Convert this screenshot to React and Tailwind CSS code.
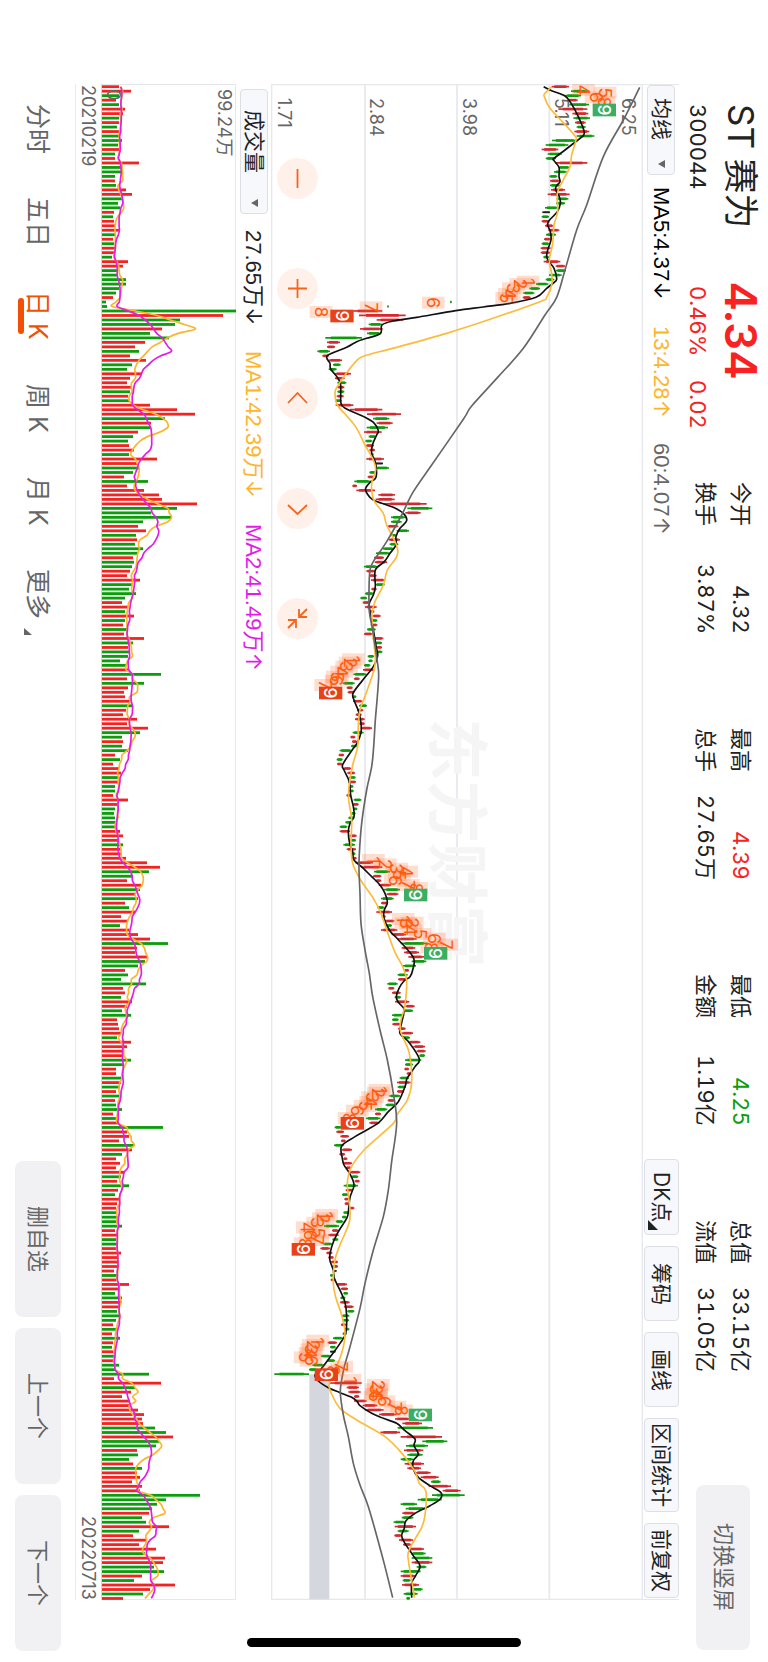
import { useState } from 'react';

const RED = '#d42a2f';
const GREEN = '#0b9d0b';

const stats = [
  [
    { label: '今开', value: '4.32' },
    { label: '换手', value: '3.87%' },
  ],
  [
    { label: '最高', value: '4.39', color: 'text-[#f92222]' },
    { label: '总手', value: '27.65万' },
  ],
  [
    { label: '最低', value: '4.25', color: 'text-[#0b9d0b]' },
    { label: '金额', value: '1.19亿' },
  ],
  [
    { label: '总值', value: '33.15亿' },
    { label: '流值', value: '31.05亿' },
  ],
];

const periods = ['分时', '五日', '日 K', '周 K', '月 K', '更多'];

// Daily volume, oldest first. Negative means the day closed lower.
const volumes = [
  17, 29, -17, 14, -17, 23, 21, -17, 17, -15, 18, -18, -20, -16, 18, -13, 13, 37, -20, -20,
  -13, 13, -14, 24, 30, -21, -16, -18, 12, -11, 12, 13, 17, -14, 11, -12, 13, 13, -10, 26,
  21, -16, -16, -24, -24, -17, -14, 11, -4, -5, -134, 121, -78, -73, 60, -48, -67, 43, 33, -37,
  28, 44, -30, -25, 40, 28, 25, 29, -28, 26, -28, 48, 75, 93, -63, 49, -48, 36, -31, -26,
  27, 32, -27, 55, 35, -37, -31, 22, -46, 25, 42, 57, 60, 95, -75, -49, -69, -41, 36, 44,
  -34, 35, -33, -41, -36, 31, -32, -30, 28, 25, 38, -30, -27, -34, -23, 20, 26, -23, 32, -23,
  21, -26, 22, 42, -31, 26, -27, -26, -18, -24, 26, -59, 25, -42, 26, 22, 23, 28, -30, 24,
  21, 35, 25, 46, -38, -20, 21, -20, -26, 13, -18, 11, 17, 19, -17, 17, -13, -13, 11, 26,
  16, -13, -12, -13, -14, -14, 18, 21, 16, -21, 19, 19, 24, 45, 58, -47, -31, 25, 39, -38,
  33, -36, 23, -27, 33, 19, 26, -18, 27, 36, 48, -66, 35, 33, 46, -43, -36, 23, -26, -19,
  -44, 21, 23, -19, 30, 25, -20, -29, 15, 16, 17, 19, -15, 29, 25, 21, 20, -29, -22, 14,
  14, -20, 19, -18, 14, -19, 13, -14, -20, 11, -15, 17, -61, 25, 27, 17, -32, 30, -20, 14,
  18, 14, 23, -19, 15, -27, 16, -13, 17, 15, 14, -15, -15, -15, -20, 13, 15, -14, -15, 16,
  19, 16, 16, 16, 12, -16, 14, 27, 17, -13, -20, 19, 18, -15, -18, -14, 11, -14, 10, -18,
  11, -10, 11, -13, 13, -17, -14, -47, 12, 59, -33, 29, 20, 28, 27, 36, 42, 40, 41, -53,
  -64, 71, -57, -54, 35, -36, -27, 31, -40, 35, 38, 30, 40, 38, -98, -64, -55, -50, 47, -40,
  -44, 67, -37, 31, 44, 37, 54, -43, 63, 61, -52, -62, 40, -32, 73, 48, -41, 21,
];

// Daily candles as colour + low-high, oldest first (r up, g down, k flat).
const candles = `
r905-957 g963-1013 g945-993 r952-983 g958-1017 r925-1012 r967-1015 g970-1020 r975-1007 g980-1007
r973-1018 g980-1033 g906-983 g887-955 r875-925 g893-935 g887-918 r915-1012 g925-960 g912-950
g898-922 r900-930 g900-930 r903-945 r893-959 g920-955 g918-945 g885-925 k877-900 g875-897
r875-897 r885-910 r895-928 g888-918 r882-902 g875-897 r872-902 r872-900 g880-897 r881-931
r917-945 g918-948 g897-935 g887-913 g858-895 g838-870 g820-853 r818-842 g600-605 g412-416
r310-397 r327-467 r380-460 g356-397 r330-398 g351-393 g226-336 r231-270 r231-255 g202-240
r217-237 r235-276 g249-272 g236-260 r252-303 r255-284 g262-289 r262-283 g262-283 r260-281
g255-275 r257-310 r300-397 r351-453 g369-418 r380-428 g350-414 r342-395 g356-378 g346-367
r348-372 r358-375 g360-371 r349-402 k376-399 g376-417 g358-378 r353-372 g313-363 r307-321
r319-375 r385-435 r377-434 r400-530 g472-547 r466-512 g423-467 g423-455 r412-445 g440-477
g425-438 r416-450 g419-445 g398-432 g378-419 r372-402 r374-411 g342-383 r349-375 r358-380
r363-406 g377-404 r364-380 g345-371 g331-351 r338-358 r345-380 r357-373 r368-392 g366-382
r362-382 g351-377 r342-367 r368-400 g375-396 r380-396 g376-397 g353-372 g355-368 g342-361
r339-374 g310-349 r312-329 g278-314 r290-308 r293-313 g306-319 r309-337 g327-351 r321-340
r317-335 r315-344 r328-344 r332-366 g308-341 r301-316 r306-321 g303-321 g269-305 r266-282
g260-278 r261-277 r280-303 r292-315 g297-317 r295-318 g297-310 g298-311 r289-303 g311-334
r309-326 g311-322 g304-317 g295-313 g286-306 g269-292 r269-300 r299-320 g303-318 g280-315
r290-318 g305-316 r306-320 r316-369 r333-397 g372-420 r369-394 r376-394 r386-424 g402-450
r410-445 g393-431 r393-412 g382-403 r379-426 r395-407 r405-433 g405-426 r393-442 r425-468
r443-500 g452-533 r455-496 r462-507 r475-522 g485-529 g459-498 r463-477 g443-473 r444-470
g412-443 r415-433 r426-452 g434-453 r435-478 r466-494 g459-489 g426-463 g426-446 r427-452
r444-467 r455-489 g456-480 r475-511 r490-525 r500-527 g508-525 g465-514 g465-489 r463-477
r470-487 g449-477 r441-482 g443-468 r441-462 g418-450 r413-434 g407-435 g375-412 r375-393
g348-391 r358-388 g254-275 r259-282 r271-297 r273-287 g252-281 r275-306 r268-285 r280-292
r279-306 r288-303 r299-331 g304-325 r314-329 g281-324 r287-309 g276-295 r283-295 r284-297
r297-313 g280-298 g276-289 g257-280 g222-267 r246-265 r235-266 g247-265 g220-246 r211-240
r229-247 r235-251 r243-264 r247-264 k249-260 g240-254 r242-256 r259-291 r272-294 g280-294
g271-286 r270-299 r282-311 g292-313 g276-298 g278-297 r273-288 g283-298 g278-290 g249-279
r233-261 g240-257 k240-257 g213-243 g231-255 g187-222 g177-200 g73-177 r203-262 r240-335
r290-327 r295-332 r312-328 r312-350 r338-382 r345-401 r387-440 r435-480 r457-516 g443-549
r391-450 r452-576 g517-592 g468-534 r462-520 g472-518 g452-490 r464-522 r472-513 r495-542
r512-566 g543-572 r536-603 r578-632 g546-644 g503-575 g452-501 g467-530 r457-495 g455-490
g431-467 r434-498 g443-476 r433-455 r447-489 r459-483 r475-522 g483-527 g485-547 r485-547
g500-529 g452-512 r452-497 g458-482 r456-507 g488-518 g461-503 g469-480`
  .trim()
  .split(/\s+/)
  .map((item) => {
    const [low, high] = item.slice(1).split('-').map(Number);
    return { kind: item[0], low, high };
  });

const ma5 = `881,50 905,62 945,78 962,98 985,140 1003,188 990,205 968,222 945,240 912,265 912,272 927,292
927,320 930,335 918,350 918,362 928,380 931,400 922,425 897,452 893,465 901,485 903,510 893,540 890,560
897,575 912,595 920,625 915,635 890,655 858,682 780,700 700,711 617,722 500,742 430,753 396,765 391,791
350,805 320,815 290,832 232,857 240,880 242,897 262,922 272,945 273,1000 290,1017 345,1042 373,1060
385,1082 380,1095 368,1123 365,1150 377,1180 378,1222 360,1237 347,1255 352,1272 368,1289 395,1300
430,1312 460,1330 470,1352 450,1375 438,1400 438,1425 420,1450 403,1475 376,1500 376,1550 370,1575
358,1600 360,1625 370,1680 378,1727 383,1757 370,1790 345,1822 310,1868 312,1890 326,1925 333,1960
333,1987 322,2018 305,2042 278,2084 282,2100 298,2135 302,2175 310,2210 312,2240 300,2260 295,2285
299,2320 308,2345 312,2370 340,2395 365,2420 388,2443 405,2470 412,2498 403,2520 402,2545 420,2583
443,2607 490,2662 488,2700 480,2720 462,2733 447,2755 439,2780 445,2797 462,2818 455,2858 450,2890
478,2918 508,2967 495,2990 478,3015 470,3028 465,3050 445,3095 415,3125 387,3157 350,3180 315,3200
275,3228 277,3265 282,3285 300,3312 312,3345 300,3382 295,3425 290,3445 262,3490 245,3530 239,3567
250,3600 253,3625 272,3665 285,3697 290,3740 287,3790 270,3820 245,3855 215,3895 195,3915 205,3933
235,3953 270,3968 305,3982 322,3995 330,4007 365,4030 400,4045 440,4060 465,4082 495,4107 492,4127
505,4152 490,4172 490,4197 505,4222 540,4247 573,4268 570,4288 540,4307 500,4327 468,4352 463,4375
455,4397 465,4420 490,4457 510,4488 497,4517 485,4540 485,4583`;

const ma13 = `905,50 885,70 883,80 900,115 940,158 975,198 978,210 965,255 960,290 937,335 922,370 923,425
912,465 908,520 898,570 903,600 906,640 890,682 870,695 720,748 590,790 440,832 345,857 320,872 285,915
262,950 255,968 262,1005 290,1037 320,1075 345,1125 370,1170 377,1200 366,1235 365,1260 372,1292
400,1330 410,1365 440,1427 440,1460 412,1500 400,1545 375,1595 366,1630 369,1690 376,1765 372,1800
350,1865 330,1920 325,1965 323,2030 308,2085 297,2150 296,2190 305,2250 303,2320 308,2380 332,2430
370,2485 393,2530 412,2585 435,2647 458,2690 470,2733 464,2810 453,2850 452,2885 478,2950 485,3037
472,3090 440,3135 430,3160 345,3237 310,3280 297,3310 292,3345 300,3420 297,3460 270,3525 255,3570
250,3640 258,3685 275,3735 285,3790 275,3850 250,3910 237,3945 245,3972 270,4015 320,4050 405,4100
460,4155 495,4205 508,4240 528,4265 525,4335 515,4372 478,4438 475,4470 490,4560 493,4583`;

const ma60 = `1169,52 1120,150 1060,260 1010,405 980,480 945,600 920,682 885,735 820,835 745,920 665,1008
640,1048 545,1185 490,1265 455,1335 410,1415 370,1475 360,1500 357,1560 358,1625 368,1680 382,1775
386,1815 382,1880 376,1950 371,2030 365,2090 350,2160 335,2260 328,2350 327,2400 330,2470 333,2560
345,2640 358,2710 368,2780 390,2880 412,2970 430,3070 440,3160 425,3275 415,3360 400,3440 370,3540
345,3640 330,3715 300,3830 283,3890 275,3930 271,3970 280,4035 295,4100 310,4180 330,4245 355,4310
385,4415 405,4490 428,4583`;

// Nine-turn counts: [number, x, y]
const counts = [
  [4, 1000, 60], [5, 1065, 68], [6, 1038, 82], [8, 1062, 96],
  [1, 834, 635], [2, 812, 642], [3, 790, 655], [4, 778, 672], [5, 770, 684], [6, 550, 698], [7, 363, 712], [8, 213, 726],
  [1, 310, 1768], [2, 300, 1778], [3, 290, 1790], [4, 275, 1805], [5, 262, 1820], [6, 258, 1832], [7, 227, 1845],
  [1, 370, 2370], [2, 405, 2383], [3, 440, 2396], [4, 470, 2405], [5, 448, 2415], [6, 435, 2432], [7, 475, 2445], [8, 500, 2454],
  [1, 460, 2547], [3, 468, 2560], [2, 487, 2558], [4, 482, 2580], [5, 510, 2592], [6, 553, 2606], [7, 590, 2624], [8, 545, 2632],
  [1, 390, 3060], [2, 385, 3068], [3, 368, 3082], [4, 362, 3096], [5, 345, 3108], [6, 322, 3122], [8, 297, 3144],
  [1, 230, 3435], [2, 220, 3445], [3, 203, 3458], [4, 172, 3472], [5, 205, 3488], [6, 182, 3495], [7, 203, 3510], [8, 165, 3520],
  [1, 203, 3812], [2, 190, 3825], [3, 185, 3838], [4, 180, 3850], [5, 165, 3862], [6, 183, 3872], [7, 275, 3890], [8, 250, 3902],
  [1, 300, 3930], [2, 385, 3945], [3, 380, 3958], [4, 380, 3972], [5, 375, 3980], [6, 402, 3994], [7, 435, 4010], [8, 455, 4022],
];

const nines = [
  [1063, 120, '#3cae62'],
  [276, 738, '#e8411a'],
  [242, 1869, '#e8411a'],
  [497, 2475, '#3cae62'],
  [557, 2650, '#3cae62'],
  [307, 3160, '#e8411a'],
  [160, 3538, '#e8411a'],
  [229, 3914, '#e8411a'],
  [511, 4035, '#3cae62'],
];

function smoothPath(points) {
  let d = `M${points[0][0]} ${points[0][1]}`;
  for (let i = 0; i < points.length - 1; i++) {
    const p0 = points[i - 1] || points[i];
    const p1 = points[i];
    const p2 = points[i + 1];
    const p3 = points[i + 2] || p2;
    d += `C${p1[0] + (p2[0] - p0[0]) / 6} ${p1[1] + (p2[1] - p0[1]) / 6} ${p2[0] - (p3[0] - p1[0]) / 6} ${p2[1] - (p3[1] - p1[1]) / 6} ${p2[0]} ${p2[1]}`;
  }
  return d;
}

function parsePoints(text) {
  return text.trim().split(/\s+/).map((p) => p.split(',').map(Number));
}

function averageLine(days) {
  return volumes.map((_, i) => {
    let sum = 0;
    for (let k = i - days + 1; k <= i; k++) sum += k < 0 ? 19 : Math.abs(volumes[k]);
    return [102 + sum / days, 86.7 + i * 4.486];
  });
}

function SideText({ x, y, children, ...rest }) {
  return (
    <text transform={`translate(${x} ${y}) rotate(90)`} {...rest}>
      {children}
    </text>
  );
}

function PriceChart() {
  return (
    <svg viewBox="63 42 1116 4548" className="block h-full w-full [writing-mode:horizontal-tb]" aria-label="日K线图">
      <g fill="none" stroke="#e6e8ee" strokeWidth="4">
        <path d="M345 44V4588M621 44V4588M898 44V4588" strokeWidth="5" />
        <path d="M65 44H1177V4588H65Z" />
      </g>
      <SideText x="552" y="1945" fontSize="187" fontWeight="700" fill="#f5f5f6">东方财富</SideText>
      <rect x="178" y="3913" width="60" height="675" fill="#d4d7dd" />
      <g fontSize="54" fill="#666">
        <SideText x="83" y="84">1.71</SideText>
        <SideText x="361" y="84">2.84</SideText>
        <SideText x="638" y="84">3.98</SideText>
        <SideText x="916" y="84">5.11</SideText>
        <SideText x="1117" y="84">6.25</SideText>
      </g>
      {candles.map(({ kind, low, high }, i) => {
        const y = 50 + i * 13.457;
        const color = kind === 'r' ? RED : kind === 'g' ? GREEN : '#222';
        const inset = (high - low) * 0.15;
        return (
          <g key={i} stroke={color}>
            <line x1={low} x2={high} y1={y} y2={y} strokeWidth="5" />
            <line x1={low + inset} x2={high - inset} y1={y} y2={y} strokeWidth={kind === 'k' ? 5 : 8} />
          </g>
        );
      })}
      <g fill="none">
        <path d={smoothPath(parsePoints(ma5))} stroke="#111" strokeWidth="5" />
        <path d={smoothPath(parsePoints(ma13))} stroke="#fdbb3c" strokeWidth="5" />
        <path d={smoothPath(parsePoints(ma60))} stroke="#666" strokeWidth="5" />
      </g>
      {counts.map(([n, x, y]) => (
        <g key={`${n}-${y}`}>
          <rect x={x - 34} y={y - 18} width="68" height="36" fill="#ff6a2a" fillOpacity="0.22" />
          <SideText x={x - 19} y={y} fontSize="52" fill="#ff5a0a" textAnchor="middle">{n}</SideText>
        </g>
      ))}
      {nines.map(([x, y, fill]) => (
        <g key={y}>
          <rect x={x - 35} y={y - 19} width="70" height="38" fill={fill} />
          <SideText x={x - 19} y={y} fontSize="52" fontWeight="500" fill="#fff" textAnchor="middle">9</SideText>
        </g>
      ))}
    </svg>
  );
}

function VolumeChart() {
  return (
    <svg viewBox="101 84 135 1516" className="block h-full w-full [writing-mode:horizontal-tb]" aria-label="成交量图">
      <path d="M101 84.5H235.5V1599.5H101" stroke="#e6e7eb" fill="none" />
      <path d="M101.5 84V1600" stroke="#d5d5da" fill="none" />
      {volumes.map((v, i) => (
        <rect key={i} x="102" y={85.3 + i * 4.486} width={Math.abs(v)} height="2.8" fill={v > 0 ? '#f52222' : GREEN} />
      ))}
      <g fontSize="18" fill="#666">
        <SideText x="107" y="89">0</SideText>
        <SideText x="218" y="89">99.24万</SideText>
      </g>
      <path d={smoothPath(averageLine(5))} stroke="#fdb52c" strokeWidth="1.7" fill="none" />
      <path d={smoothPath(averageLine(10))} stroke="#e21ee6" strokeWidth="1.7" fill="none" />
    </svg>
  );
}

function Picker({ label, options, className }) {
  return (
    <label className={`relative flex w-7 items-center rounded border border-[#dcdfe6] bg-[#f7f8fb] ${className}`}>
      <select
        aria-label={label}
        className="h-full w-full appearance-none bg-transparent text-[21px] leading-[26px] text-[#222] [writing-mode:vertical-rl] [text-orientation:sideways]"
      >
        {options.map((option) => (
          <option key={option}>{option}</option>
        ))}
      </select>
      <svg viewBox="0 0 7 8" className="pointer-events-none absolute bottom-1.5 left-[10px] h-2 w-[7px]">
        <path d="M7 0V8L0 4Z" fill="#666" />
      </svg>
    </label>
  );
}

function ToolButton({ className, children }) {
  return (
    <button className={`relative flex w-[35px] items-center justify-center rounded border border-[#dcdfe6] bg-[#f7f8fb] text-[21px] whitespace-nowrap text-[#222] ${className}`}>
      {children}
    </button>
  );
}

function Reading({ text, up, className }) {
  return (
    <span className={`font-['Liberation_Sans','Noto_Sans_CJK_SC',sans-serif] ${className}`}>
      {text}
      <span className="font-['Inter',sans-serif]">{up ? '↑' : '↓'}</span>
    </span>
  );
}

const chartControls = [
  { label: '缩小', path: 'M20.5 11V30' },
  { label: '放大', path: 'M20.5 11V30M11 20.5H30' },
  { label: '左移', path: 'M11 25L20.5 15L30 25' },
  { label: '右移', path: 'M11 17L20.5 26L30 17' },
  { label: '退出全屏', path: 'M22 11V19H30M22 19L30 11M11 22H19V30M19 22L11 30' },
];

function App() {
  const [period, setPeriod] = useState('日 K');

  return (
    <div className="relative flex h-screen w-full flex-col overflow-hidden bg-white font-['Inter','Noto_Sans_CJK_SC',sans-serif] text-[#222] [writing-mode:vertical-rl] [text-orientation:sideways]">
      <header className="flex w-[89px] items-start whitespace-nowrap pt-[104px] pb-3 tabular-nums">
        <div className="flex h-[178px] flex-col gap-[7px] pr-[5px]">
          <h1 className="text-[35px] leading-[44px]">ST 赛为</h1>
          <p className="text-[22px] leading-7">300044</p>
        </div>
        <div className="flex h-[200px] flex-col gap-[7px] pr-[5px] text-[#f92222]">
          <strong className="text-[44px] leading-[44px] font-semibold">4.34</strong>
          <p className="flex gap-6 ps-1 text-[22px] leading-7">
            <span>0.46%</span>
            <span>0.02</span>
          </p>
        </div>
        <div className="flex gap-[94px] pr-[13px]">
          {stats.map((rows) => (
            <dl key={rows[0].label} className="flex h-[152px] flex-col gap-[7px] text-[22px] leading-7">
              {rows.map((row) => (
                <div key={row.label} className="flex justify-between">
                  <dt>{row.label}</dt>
                  <dd className={row.color}>{row.value}</dd>
                </div>
              ))}
            </dl>
          ))}
        </div>
        <button className="ms-auto mr-[18px] flex h-[165px] w-[54px] items-center justify-center rounded-lg bg-[#f1f1f4] text-[22px] text-[#666]">
          切换竖屏
        </button>
      </header>

      <div className="mt-[84px] mb-[62px] flex w-9 items-center whitespace-nowrap border-x border-[#e6e7eb] pb-px">
        <Picker label="主图指标" options={['均线', 'BOLL']} className="h-[90px] [&>select]:pt-3" />
        <div className="flex gap-[26px] ps-3 text-[22px] leading-7">
          <Reading text="MA5:4.37" className="text-black" />
          <Reading text="13:4.28" up className="text-[#fdb52c]" />
          <Reading text="60:4.07" up className="text-[#666]" />
        </div>
        <div className="ms-auto flex gap-[11px]">
          <ToolButton className="h-[76px]">
            DK点
            <svg viewBox="0 0 10 10" className="absolute bottom-1 left-[3px] size-[10px]">
              <path d="M0 10H10L0 0Z" fill="#222" />
            </svg>
          </ToolButton>
          <ToolButton className="h-[75px]">筹码</ToolButton>
          <ToolButton className="h-[75px]">画线</ToolButton>
          <ToolButton className="h-[94px]">区间统计</ToolButton>
          <ToolButton className="h-[75px]">前复权</ToolButton>
        </div>
      </div>

      <div className="relative mt-[84px] mb-[62px] min-w-0 flex-1">
        <PriceChart />
        <div className="absolute top-[74px] left-[6px] flex gap-[69px]">
          {chartControls.map(({ label, path }) => (
            <button key={label} aria-label={label} className="size-[41px] rounded-full bg-[#fff1ea]">
              <svg viewBox="0 0 41 41" className="size-full" fill="none" stroke="#f2651f" strokeWidth="1.8">
                <path d={path} />
              </svg>
            </button>
          ))}
        </div>
      </div>

      <div className="mt-[89px] mb-[62px] flex w-[35px] items-center whitespace-nowrap">
        <Picker label="副图指标" options={['成交量', 'MACD']} className="h-[125px] [&>select]:pt-5" />
        <div className="flex gap-[26px] ps-4 text-[22px] leading-7">
          <Reading text="27.65万" />
          <Reading text="MA1:42.39万" className="text-[#fdb52c]" />
          <Reading text="MA2:41.49万" up className="text-[#e21ee6]" />
        </div>
      </div>

      <div className="mt-[84px] mb-[62px] w-[135px]">
        <VolumeChart />
      </div>

      <div className="mt-[84px] mb-[62px] flex w-[26px] justify-between border-l border-[#ececef] pt-px text-[18px] leading-[25px] text-[#666]">
        <time dateTime="2021-02-19">20210219</time>
        <time dateTime="2022-07-13">20220713</time>
      </div>

      <footer className="flex w-[75px] items-center whitespace-nowrap pt-[104px] pb-[11px]">
        <nav className="flex gap-[43px]">
          {periods.map((name) => (
            <button
              key={name}
              onClick={() => setPeriod(name)}
              className={`relative flex h-[50px] items-center justify-center text-[25px] leading-9 ${name === period ? 'text-[#f04f05]' : 'text-[#666]'}`}
            >
              {name}
              {name === period && <span className="absolute top-2 -left-0.5 h-9 w-[6px] rounded-full bg-[#f04f05]" />}
              {name === '更多' && (
                <svg viewBox="0 0 8 7" className="absolute -bottom-4 left-1 h-[7px] w-2">
                  <path d="M0 7H8L0 0Z" fill="#666" />
                </svg>
              )}
            </button>
          ))}
        </nav>
        <div className="ms-auto flex gap-[11px]">
          {['删自选', '上一个', '下一个'].map((name) => (
            <button key={name} className="flex h-[156px] w-[46px] items-center justify-center rounded-lg bg-[#f1f1f4] text-[22px] text-[#666]">
              {name}
            </button>
          ))}
        </div>
      </footer>

      <div className="absolute bottom-[15px] left-1/2 h-[9px] w-[274px] -translate-x-1/2 rounded-full bg-black" />
    </div>
  );
}

export default App;
